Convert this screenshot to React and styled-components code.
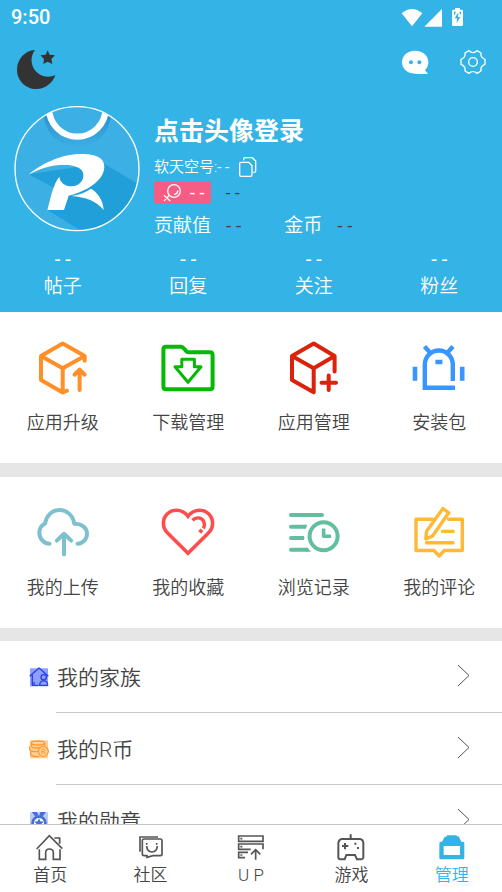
import React from "react";
import styled, { createGlobalStyle } from "styled-components";

const BLUE = "#34b4e6";
const INK = "#444";

const GlobalStyle = createGlobalStyle`
  * { box-sizing: border-box; }
  body {
    margin: 0;
    background: #fff;
    color: ${INK};
    font-family: Roboto, "Noto Sans CJK SC", sans-serif;
    font-weight: 350;
  }
  button {
    margin: 0;
    padding: 0;
    border: 0;
    background: none;
    color: inherit;
    font: inherit;
    cursor: pointer;
  }
  svg { display: block; flex: none; }
`;

const Screen = styled.div`
  display: flex;
  flex-direction: column;
  height: 100vh;
`;

const Content = styled.main`
  flex: 1;
  min-height: 0;
  overflow: hidden;
`;

const Header = styled.header`
  background: ${BLUE};
  color: #fff;
  padding-bottom: 13px;
`;

const StatusBar = styled.div`
  display: flex;
  align-items: center;
  justify-content: space-between;
  height: 34px;
  padding: 0 37px 0 11px;
`;

const Clock = styled.time`
  font-size: 20px;
  font-weight: 500;
  line-height: 34px;
`;

const Toolbar = styled.div`
  display: flex;
  align-items: flex-start;
  justify-content: space-between;
  padding: 15px 15px 16px 16px;
`;

const ToolbarActions = styled.div`
  display: flex;
  gap: 30px;
`;

const Profile = styled.section`
  display: flex;
  gap: 14px;
  padding-left: 14px;
`;

const AvatarButton = styled.button`
  align-self: flex-start;
`;

const ProfileInfo = styled.div`
  display: flex;
  flex-direction: column;
  align-items: flex-start;
  padding-top: 9px;
`;

const LoginButton = styled.button`
  font-size: 25px;
  font-weight: 700;
  line-height: 34px;
`;

const AccountLine = styled.div`
  display: flex;
  align-items: center;
  gap: 9px;
  margin-top: 5px;
  font-size: 15px;
  line-height: 26px;
`;

const BadgeLine = styled.div`
  display: flex;
  align-items: center;
  gap: 14px;
  margin-top: 1px;
  font-size: 18px;
`;

const Badge = styled.span`
  display: flex;
  align-items: center;
  gap: 8px;
  height: 23px;
  padding: 0 7px 0 8px;
  border-radius: 3px;
  background: #f65c84;
`;

const Dash = styled.span`
  color: ${(p) => (p.$dark ? INK : "inherit")};
  font-weight: 400;
  white-space: pre;
`;

const PointsLine = styled.div`
  display: flex;
  gap: 43px;
  margin-top: 8px;
  font-size: 19px;
  line-height: 28px;
`;

const Points = styled.div`
  display: flex;
  gap: 15px;
`;

const Stats = styled.div`
  display: grid;
  grid-template-columns: repeat(4, 1fr);
  margin-top: 9px;
`;

const Stat = styled.button`
  display: flex;
  flex-direction: column;
  align-items: center;
  gap: 6px;
  font-size: 19px;
  line-height: 24px;
`;

const StatValue = styled.span`
  font-size: 20px;
  font-weight: 400;
  line-height: 20px;
`;

const ShortcutGrid = styled.section`
  display: grid;
  grid-template-columns: repeat(4, 1fr);
  padding: 28px 0;
  border-bottom: ${(p) => p.$gap}px solid #e6e6e6;
`;

const Shortcut = styled.button`
  display: flex;
  flex-direction: column;
  align-items: center;
  gap: 15px;
  font-size: 18px;
  line-height: 24px;
`;

const MenuRow = styled.button`
  display: flex;
  width: 100%;
  text-align: left;
`;

const MenuIcon = styled.span`
  display: flex;
  align-items: center;
  width: 56px;
  height: 71px;
  padding-left: 29px;
`;

const MenuBody = styled.span`
  display: flex;
  flex: 1;
  align-items: center;
  justify-content: space-between;
  height: 72px;
  padding: 0 32px 2px 1px;
  border-bottom: 1px solid #c8c8c8;
  font-size: 21px;
`;

const TabBar = styled.nav`
  display: grid;
  grid-template-columns: repeat(5, 1fr);
  padding: 8px 0 6px;
  border-top: 1px solid #c4c4c4;
  background: #fff;
`;

const Tab = styled.a`
  display: flex;
  flex-direction: column;
  align-items: center;
  gap: 1px;
  color: ${(p) => (p.$active ? BLUE : INK)};
  font-size: 17px;
  line-height: 22px;
  text-decoration: none;
  white-space: pre;
`;

const StatusIcons = () => (
  <svg width="65" height="21" viewBox="447 18 195 63" fill="#fff" aria-hidden="true">
    <path d="M452 37Q483 11 514 37L483 76Z" />
    <path d="M573 24V77H520Z" />
    <path d="M612 21H627V26H632Q636 26 636 30V71Q636 75 632 75H607Q603 75 603 71V30Q603 26 607 26H612Z" />
    <path d="M622 34L611 52H618L617 66L628 48H621Z" fill={BLUE} />
    <path d="M609 32H615L611 42H609ZM630 32H625L627 40H630Z" fill={BLUE} />
  </svg>
);

const MoonIcon = () => (
  <svg width="40" height="41" viewBox="48 147 120 123" fill="#333" aria-hidden="true">
    <path d="M105 150C88 172 93 202 112 218C127 231 148 234 166 225C158 250 135 267 109 267C77 267 51 241 51 209C51 177 75 152 105 150Z" />
    <path d="M143 151L149 164L165 166L154 177L157 192L143 185L130 192L132 177L121 166L137 164Z" />
  </svg>
);

const ChatIcon = () => (
  <svg width="28" height="27" viewBox="450 147 84 81" aria-hidden="true">
    <path d="M492 152C516 152 532 167 532 187C532 197 528 205 522 211L531 221Q512 223 492 221C469 221 453 206 453 187C453 167 469 152 492 152Z" fill="#fff" />
    <circle cx="480" cy="187" r="6" fill={BLUE} />
    <circle cx="505" cy="187" r="6" fill={BLUE} />
  </svg>
);

const GearIcon = () => (
  <svg width="28" height="27" viewBox="624 147 84 81" fill="none" stroke="#fff" strokeWidth="4" strokeLinejoin="round" aria-hidden="true">
    <path d="M654 152C661 160 671 160 678 152L690 159C688 168 692 174 702 178V193C692 197 688 204 690 213L678 220C671 213 661 213 654 220L642 213C644 204 640 197 630 193V178C640 174 644 168 642 159Z" />
    <circle cx="666" cy="186" r="13" />
  </svg>
);

const Avatar = () => (
  <svg width="126" height="126" viewBox="42 33 378 378" aria-hidden="true">
    <defs>
      <clipPath id="avatarClip">
        <circle cx="231" cy="221" r="186" />
      </clipPath>
      <linearGradient id="ringShade" x1="0" y1="0" x2="0" y2="1">
        <stop offset="0.5" stopColor="#2c91cd" />
        <stop offset="1" stopColor="#3cafe5" />
      </linearGradient>
    </defs>
    <g clipPath="url(#avatarClip)">
      <rect x="42" y="33" width="378" height="378" fill="#3cafe5" />
      <path d="M86 238L310 205L425 273V420H265L142 345L176 286Z" fill="#209fd8" />
      <circle cx="232" cy="57" r="100" fill="url(#ringShade)" />
      <circle cx="232" cy="40" r="85" fill="#3cafe5" stroke="#fff" strokeWidth="19" />
      <path d="M86 239C112 215 170 183 225 178C272 174 313 182 313 215C313 252 268 287 206 302L192 345H142C152 310 158 270 178 245C180 262 194 274 215 274C238 273 252 257 250 238C247 213 212 207 172 211C140 214 110 226 86 239Z" fill="#fff" />
      <path d="M215 303C240 299 259 291 273 281C293 292 310 317 311 345C290 319 257 306 215 303Z" fill="#fff" />
    </g>
    <circle cx="231" cy="221" r="186" fill="none" stroke="#fff" strokeWidth="4" />
  </svg>
);

const CopyIcon = () => (
  <svg width="20" height="22" viewBox="281 147 60 66" fill="none" stroke="#fff" strokeWidth="4" strokeLinejoin="round" aria-hidden="true">
    <path d="M290 166H313L323 176V203Q323 208 318 208H290Q286 208 286 203V170Q286 166 290 166Z" />
    <path d="M298 160V156Q298 152 302 152H324L334 162V192Q334 196 329 196H327" />
  </svg>
);

const GenderIcon = () => (
  <svg width="20" height="20" viewBox="48 230 60 60" fill="none" stroke="#fff" strokeWidth="4" strokeLinecap="round" aria-hidden="true">
    <circle cx="84" cy="254" r="19" />
    <path d="M95 254Q95 263 86 264M69 268L55 283M55 268L72 283" />
  </svg>
);

const LineIcon = ({ color, width = 4, children }) => (
  <svg width="56" height="56" viewBox="0 0 56 56" fill="none" stroke={color} strokeWidth={width} strokeLinecap="round" strokeLinejoin="round" aria-hidden="true">
    {children}
  </svg>
);

const UpgradeIcon = () => (
  <LineIcon color="#ff8f26">
    <path d="M32 50.7L27.7 52.5L6 40V16L27.7 3.5L49.7 16V20.7M6 16L27.7 28.3L49.7 16M27.7 28.3V52.5" />
    <path d="M44.6 50V30M39.5 34.7L44.6 29.7L49.7 34.7" />
  </LineIcon>
);

const DownloadIcon = () => (
  <LineIcon color="#07b807">
    <path d="M6 6.7H21Q22.5 6.7 24 8.5L26.5 11.3Q27.5 12.3 29 12.3H50Q52.6 12.3 52.6 15V46.5Q52.6 49.2 50 49.2H6Q3.4 49.2 3.4 46.5V9.3Q3.4 6.7 6 6.7Z" />
    <path d="M21.8 19.3H34.4V26.7H41L28 42.3L15 26.7H21.8Z" strokeWidth="3" />
  </LineIcon>
);

const ManageAppsIcon = () => (
  <LineIcon color="#db230c">
    <path d="M27.7 52.3L6 40V16L27.7 3.5L48.6 16V31.5M6 16L27.7 28.3L48.6 16M27.7 28.3V52.3" />
    <path d="M35.5 42.7H50M42.7 35.5V50" />
  </LineIcon>
);

const PackageIcon = () => (
  <svg width="56" height="56" viewBox="0 0 56 56" fill="none" stroke="#3995ff" strokeWidth="4.4" aria-hidden="true">
    <path d="M44 47.8H13.8V24.5A14 14 0 0 1 41.8 24.5V41M13.5 6.5L19 12.5M42 6.5L36.5 12.5" />
    <path d="M24.4 22H31.4M4 26.7V40.7M51.2 26.7V40.7" strokeWidth="4.6" />
  </svg>
);

const UploadIcon = () => (
  <LineIcon color="#7fc0cf">
    <path d="M14.5 38.7C8.8 38.7 4.3 33.6 4.3 27.8C4.3 24 6.3 20.6 10 18.6C11.2 10.8 17 5 24.6 5C32 5 38.3 10.8 39.3 18.8C46.4 18.4 52 22.6 52 28.7C52 34 48 38.7 42.5 38.7" />
    <path d="M29 49.5V29.5M21.8 35.6L29 28.8L36.2 35.6" />
  </LineIcon>
);

const FavoriteIcon = () => (
  <LineIcon color="#ff4d4d">
    <path d="M28 48.3L8.3 28.8C4.8 25.3 3.4 22.2 3.4 18.4C3.4 11 9.2 5.3 16.3 5.3C21 5.3 25.2 7.6 28 11.2C30.8 7.6 35 5.3 39.7 5.3C46.8 5.3 52.6 11 52.6 18.4C52.6 22.2 51.2 25.3 47.7 28.8Z" strokeLinejoin="miter" strokeWidth="3.6" />
    <path d="M32.4 15.3C36 11.8 41.3 12 43.5 16C44.8 18.5 44.6 21 43.4 23.4" strokeWidth="3.4" strokeLinecap="butt" />
    <path d="M42 24.9L39.6 27.3" strokeWidth="4" strokeLinecap="butt" />
  </LineIcon>
);

const HistoryIcon = () => (
  <LineIcon color="#62bf9d">
    <path d="M5 10H36M5 21.7H18.5M5 33H16.5M5 44.7H20.5" />
    <path d="M18 23.7H19.6L21.2 19.7H18ZM16 35H18V31H16ZM20 46.7H25L21.5 42.7H20Z" fill="#62bf9d" stroke="none" />
    <circle cx="37.6" cy="31.2" r="14" />
    <path d="M37.6 25.2V31.2H43.3" strokeLinecap="square" strokeWidth="3.6" />
  </LineIcon>
);

const CommentIcon = () => (
  <LineIcon color="#ffb937" width="3.4">
    <path d="M21.5 14.3H5V45.5H23L28.2 51L33.3 45.5H51.3V14.3H37.5" />
    <path d="M14.8 33.8L15.6 26.2L31.9 3.6L37.8 7.8L21.4 31.2Z" />
    <path d="M31.5 26.4H42.3M15.5 37.7H42" />
  </LineIcon>
);

const MenuGlyph = ({ y, tint, children }) => (
  <svg width="20" height="20" viewBox={`87 ${y} 60 60`} fill="none" strokeLinejoin="round" aria-hidden="true">
    <rect x="90" y={y + 4} width="54" height="54" fill={tint} />
    {children}
  </svg>
);

const FamilyIcon = () => (
  <MenuGlyph y={79} tint="#8fa0ff">
    <path d="M89 107L117 82L145 107M97 102V134H116M102 124V134" stroke="#2a3fe8" strokeWidth="4" />
    <circle cx="131" cy="110" r="8" stroke="#2a3fe8" strokeWidth="4" />
    <path d="M119 134Q119 121 131 120Q143 121 143 134Z" stroke="#2a3fe8" strokeWidth="4" />
  </MenuGlyph>
);

const CoinIcon = () => (
  <MenuGlyph y={293} tint="#ffd09a">
    <g stroke="#ff9a2e" strokeWidth="4">
      <path d="M94 304Q94 299 114 299Q134 299 134 305Q134 311 114 311Q94 311 94 304ZM94 305V315Q100 322 122 319M134 306V313M89 315Q86 326 94 329Q104 332 114 330M92 330V340Q98 346 118 346" />
      <circle cx="130" cy="330" r="15" fill="#ffd09a" />
      <path d="M126 338V323H131Q135 323 135 327Q135 331 131 331H126M131 331L136 338" strokeWidth="3" />
    </g>
  </MenuGlyph>
);

const MedalIcon = () => (
  <MenuGlyph y={506} tint="#bccbf5">
    <path d="M95 509H111L115 519L107 523ZM121 509H138L127 523L118 519Z" fill="#4270dc" />
    <circle cx="117" cy="542" r="19" fill="#fff" stroke="#4270dc" strokeWidth="8" />
    <path d="M117 528L121 537L131 538L124 545L126 555L117 550L108 555L110 545L103 538L113 537Z" fill="#4270dc" />
  </MenuGlyph>
);

const Chevron = () => (
  <svg width="13" height="23" viewBox="0 0 13 23" fill="none" stroke="#555" strokeWidth="1" aria-hidden="true">
    <path d="M1 1L12 11.5L1 22" />
  </svg>
);

const TabIcon = ({ viewBox, children }) => (
  <svg width="30" height="30" viewBox={viewBox} fill="none" stroke="#555" strokeWidth="5" aria-hidden="true">
    {children}
  </svg>
);

const HomeIcon = () => (
  <TabIcon viewBox="106 39 90 90">
    <path d="M111 87L149 47L188 86M119 88V118H138V98Q138 87 149 87Q161 87 161 98V118H181V88M164 54H180V71" />
  </TabIcon>
);

const CommunityIcon = () => (
  <TabIcon viewBox="407 39 90 90">
    <path d="M419 95V51H473" />
    <path d="M431 57H480Q485 57 485 62V102Q485 107 480 107H458L440 112V107H431Q426 107 426 102V62Q426 57 431 57Z" />
    <path d="M439 78Q440 95 455 96Q470 95 471 78M439 69V74M469 69V74" />
  </TabIcon>
);

const PublishIcon = () => (
  <TabIcon viewBox="708 39 90 90">
    <path d="M716 48H789V64H716ZM789 88V72H716V88H752M744 97H716V113H735" />
    <path d="M721 56H727M721 80H727M721 105H727" />
    <path d="M767 119V89M753 103L767 89L781 103" />
  </TabIcon>
);

const GameIcon = () => (
  <TabIcon viewBox="256 99 90 90">
    <path d="M274 117H327Q338 118 338 130V173Q337 178 332 178H319L313 165H287L282 178H269Q263 178 263 172V130Q264 118 274 117ZM300 103V117" strokeWidth="6" />
    <path d="M274 138H293M283 129V148" strokeWidth="6" />
    <path d="M311 131H317M319 144H325" strokeWidth="6" />
  </TabIcon>
);

const ManageIcon = () => (
  <svg width="30" height="30" viewBox="557 99 90 90" aria-hidden="true">
    <path d="M586 106H616V109H622L630 125H635Q639 126 639 130V174Q639 178 635 178H568Q564 178 564 174V130Q564 126 568 125H572L580 110H586Z" fill={BLUE} />
    <path d="M577 138H626V165H577Z" fill="#fff" />
  </svg>
);

const stats = ["帖子", "回复", "关注", "粉丝"];

const toolShortcuts = [
  { label: "应用升级", Icon: UpgradeIcon },
  { label: "下载管理", Icon: DownloadIcon },
  { label: "应用管理", Icon: ManageAppsIcon },
  { label: "安装包", Icon: PackageIcon },
];

const personalShortcuts = [
  { label: "我的上传", Icon: UploadIcon },
  { label: "我的收藏", Icon: FavoriteIcon },
  { label: "浏览记录", Icon: HistoryIcon },
  { label: "我的评论", Icon: CommentIcon },
];

const menu = [
  { label: "我的家族", Icon: FamilyIcon },
  { label: "我的R币", Icon: CoinIcon },
  { label: "我的勋章", Icon: MedalIcon },
];

const tabs = [
  { label: "首页", Icon: HomeIcon },
  { label: "社区", Icon: CommunityIcon },
  { label: "U P", Icon: PublishIcon },
  { label: "游戏", Icon: GameIcon },
  { label: "管理", Icon: ManageIcon, active: true },
];

const Shortcuts = ({ items, gap }) => (
  <ShortcutGrid $gap={gap}>
    {items.map(({ label, Icon }) => (
      <Shortcut key={label} type="button">
        <Icon />
        {label}
      </Shortcut>
    ))}
  </ShortcutGrid>
);

export default function App() {
  return (
    <Screen>
      <GlobalStyle />
      <Content>
        <Header>
          <StatusBar>
            <Clock>9:50</Clock>
            <StatusIcons />
          </StatusBar>
          <Toolbar>
            <button type="button" aria-label="夜间模式"><MoonIcon /></button>
            <ToolbarActions>
              <button type="button" aria-label="消息"><ChatIcon /></button>
              <button type="button" aria-label="设置"><GearIcon /></button>
            </ToolbarActions>
          </Toolbar>
          <Profile>
            <AvatarButton type="button" aria-label="头像"><Avatar /></AvatarButton>
            <ProfileInfo>
              <LoginButton type="button">点击头像登录</LoginButton>
              <AccountLine>
                <span>软天空号:<Dash>- -</Dash></span>
                <button type="button" aria-label="复制"><CopyIcon /></button>
              </AccountLine>
              <BadgeLine>
                <Badge><GenderIcon /><Dash>- -</Dash></Badge>
                <Dash $dark>- -</Dash>
              </BadgeLine>
              <PointsLine>
                <Points>贡献值<Dash $dark>- -</Dash></Points>
                <Points>金币<Dash $dark>- -</Dash></Points>
              </PointsLine>
            </ProfileInfo>
          </Profile>
          <Stats>
            {stats.map((label) => (
              <Stat key={label} type="button">
                <StatValue>- -</StatValue>
                {label}
              </Stat>
            ))}
          </Stats>
        </Header>
        <Shortcuts items={toolShortcuts} gap={14} />
        <Shortcuts items={personalShortcuts} gap={13} />
        {menu.map(({ label, Icon }) => (
          <MenuRow key={label} type="button">
            <MenuIcon><Icon /></MenuIcon>
            <MenuBody>{label}<Chevron /></MenuBody>
          </MenuRow>
        ))}
      </Content>
      <TabBar>
        {tabs.map(({ label, Icon, active }) => (
          <Tab key={label} href="#" $active={active} aria-current={active ? "page" : undefined}>
            <Icon />
            {label}
          </Tab>
        ))}
      </TabBar>
    </Screen>
  );
}
